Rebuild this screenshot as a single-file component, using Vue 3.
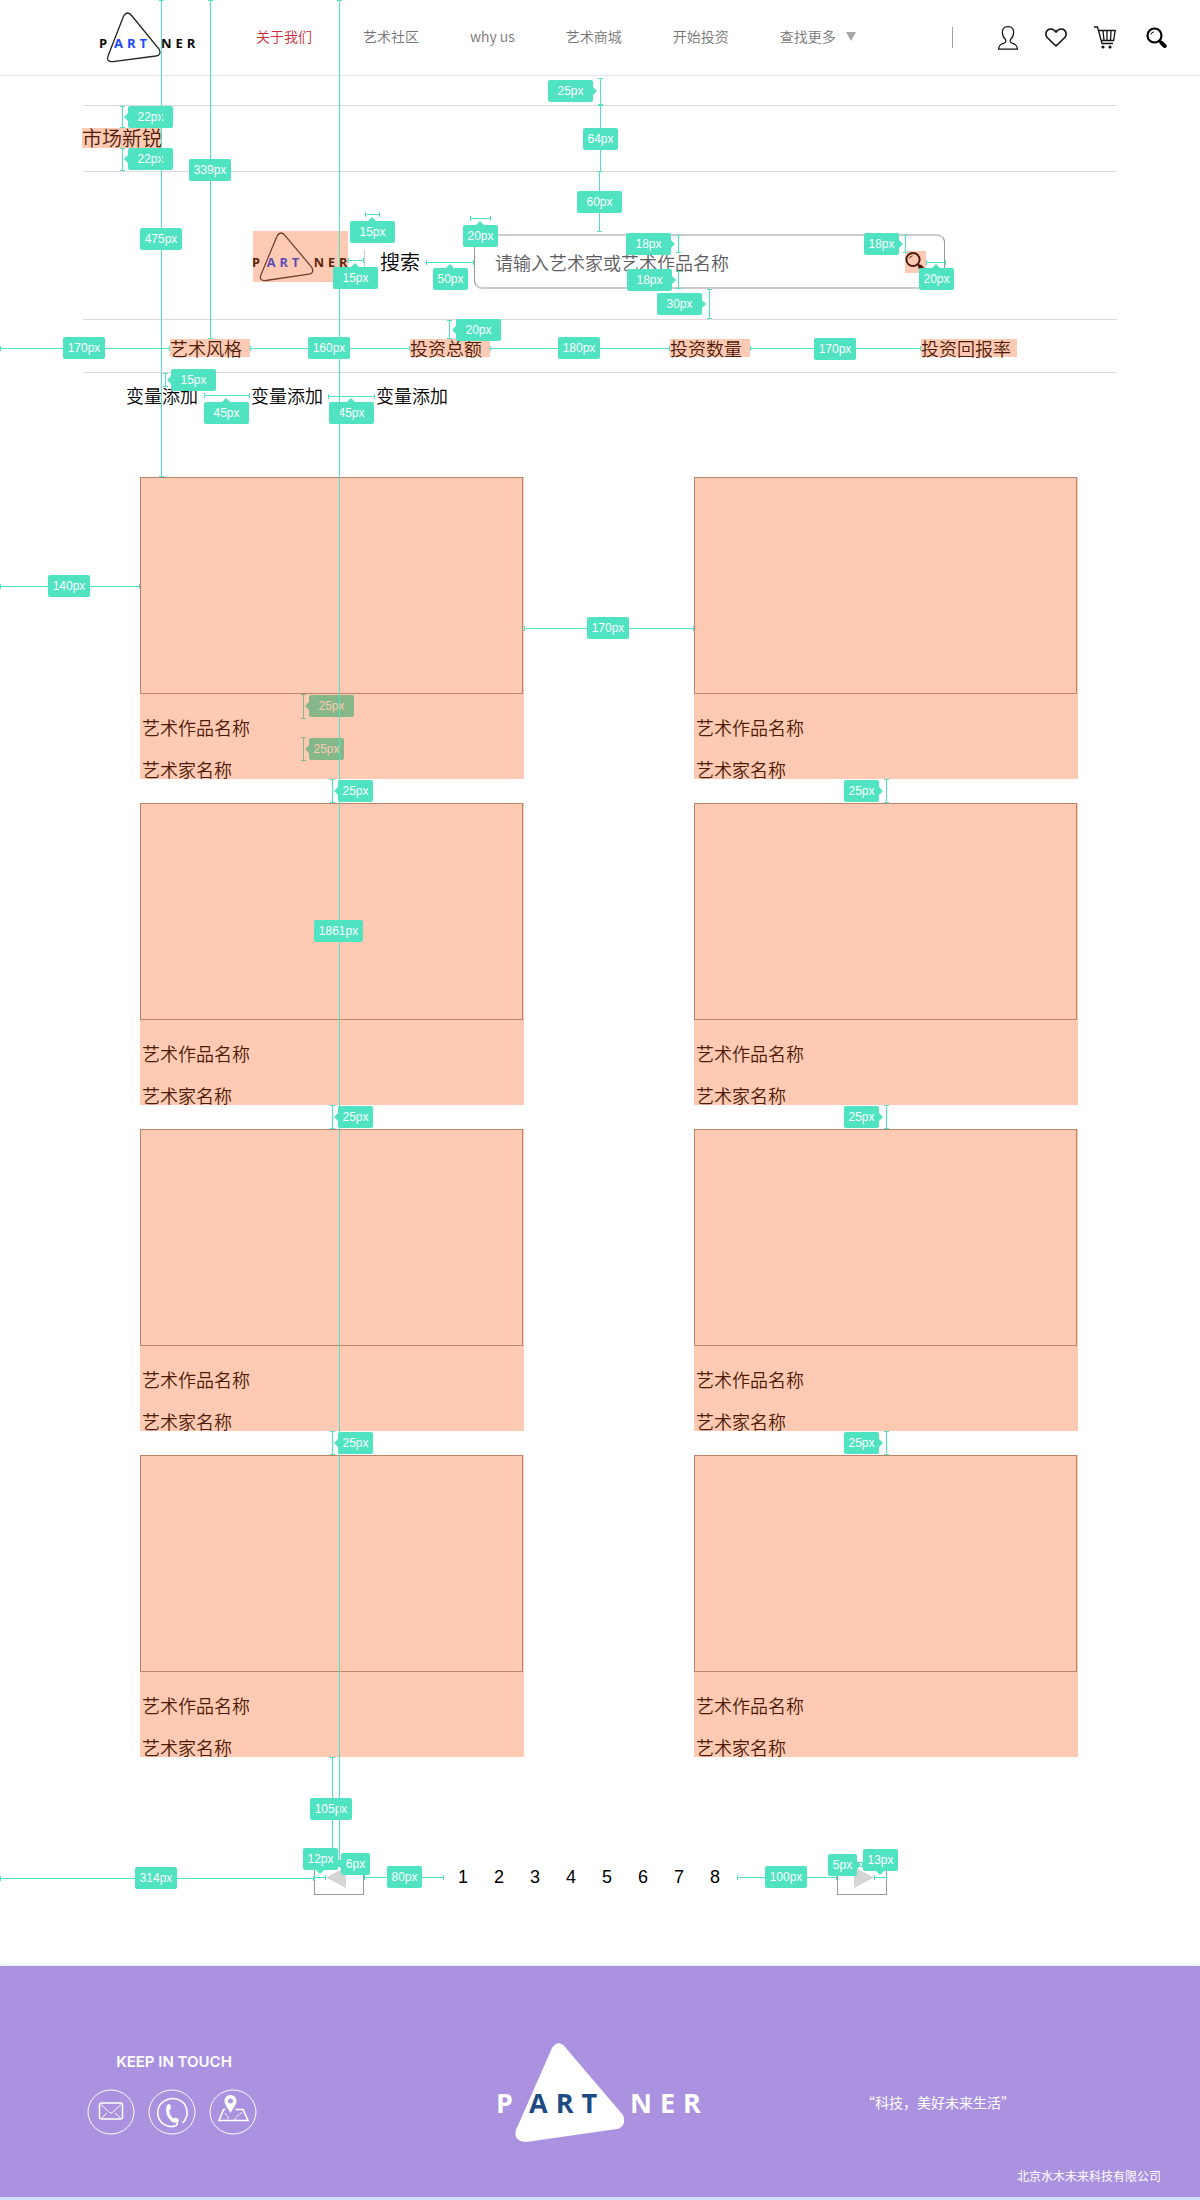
<script setup>
const navItems = ['艺术社区', 'why us', '艺术商城', '开始投资']
const filters = ['艺术风格', '投资总额', '投资数量', '投资回报率']
const variables = ['变量添加', '变量添加', '变量添加']
const works = Array.from({ length: 8 }, (_, i) => ({
  id: i + 1,
  title: '艺术作品名称',
  artist: '艺术家名称',
}))
const pages = [1, 2, 3, 4, 5, 6, 7, 8]

// Spacing marks: label text, badge box, pointer side and the measured span [x, y, length, direction]
const mark = (text, x, y, w, arrow, line, muted = false) => ({ text, x, y, w, arrow, line, muted })
const rowGaps = [780, 1106, 1432].flatMap((y) => [
  mark('25px', 338, y, 35, 'left', [332, y - 1, 24, 'v']),
  mark('25px', 844, y, 35, 'right', [886, y - 1, 24, 'v']),
])
const marks = [
  mark('22px', 128, 106, 45, 'left', [122, 106, 22, 'v']),
  mark('22px', 128, 148, 45, 'left', [122, 148, 23, 'v']),
  mark('25px', 548, 80, 45, 'right', [600, 78, 27, 'v']),
  mark('64px', 583, 128, 35, '', [600, 105, 67, 'v']),
  mark('60px', 577, 191, 45, '', [599, 171, 61, 'v']),
  mark('15px', 350, 221, 45, 'up', [365, 214, 15, 'h']),
  mark('20px', 463, 225, 35, 'up', [470, 218, 21, 'h']),
  mark('15px', 333, 267, 45, 'up', [348, 260, 16, 'h']),
  mark('50px', 433, 268, 35, 'up', [426, 262, 48, 'h']),
  mark('18px', 626, 233, 45, 'right', [678, 235, 18, 'v']),
  mark('18px', 627, 269, 45, 'right', [678, 271, 18, 'v']),
  mark('18px', 864, 233, 35, 'right', [905, 235, 18, 'v']),
  mark('20px', 919, 268, 35, 'up', [926, 262, 20, 'h']),
  mark('30px', 657, 293, 45, 'right', [709, 289, 30, 'v']),
  mark('20px', 456, 319, 45, 'left', [449, 320, 19, 'v']),
  mark('170px', 63, 337, 42, '', [0, 348, 170, 'h']),
  mark('180px', 558, 337, 42, '', [490, 348, 180, 'h']),
  mark('170px', 814, 338, 42, '', [750, 348, 171, 'h']),
  mark('15px', 171, 369, 45, 'left', [165, 373, 14, 'v']),
  mark('45px', 204, 402, 45, 'up', [204, 395, 46, 'h']),
  mark('45px', 329, 402, 45, 'up', [328, 396, 47, 'h']),
  mark('140px', 48, 575, 42, '', [0, 586, 140, 'h']),
  mark('170px', 587, 617, 42, '', [524, 628, 170, 'h']),
  mark('25px', 309, 695, 45, 'left', [303, 694, 25, 'v'], true),
  mark('25px', 309, 738, 35, 'left', [303, 737, 24, 'v'], true),
  ...rowGaps,
  mark('105px', 310, 1798, 42, '', [332, 1757, 105, 'v']),
  mark('475px', 140, 228, 42, '', [161, 0, 477, 'v']),
  mark('339px', 189, 159, 42, '', [210, 0, 339, 'v']),
  mark('1861px', 314, 920, 49, '', [339, 0, 1861, 'v']),
  mark('160px', 308, 337, 42, '', [250, 348, 160, 'h']),
  mark('12px', 303, 1848, 35, 'down', [314, 1877, 12, 'h']),
  mark('6px', 341, 1853, 29, 'left', [338, 1861, 6, 'v']),
  mark('80px', 387, 1866, 35, '', [364, 1877, 80, 'h']),
  mark('314px', 135, 1867, 42, '', [0, 1878, 314, 'h']),
  mark('100px', 765, 1866, 42, '', [737, 1877, 100, 'h']),
  mark('5px', 828, 1854, 29, 'right', [862, 1862, 5, 'v']),
  mark('13px', 863, 1849, 35, 'down', [874, 1877, 13, 'h']),
]

function spanPath([x, y, len, dir]) {
  return dir === 'v'
    ? `M${x} ${y}h1v${len}h-1zM${x - 2} ${y}h5v1h-5zM${x - 2} ${y + len - 1}h5v1h-5z`
    : `M${x} ${y}h${len}v1h-${len}zM${x} ${y - 2}h1v5h-1zM${x + len - 1} ${y - 2}h1v5h-1z`
}

function pointerPath({ x, y, w, arrow }) {
  const cx = x + Math.floor(w / 2)
  if (arrow === 'left') return `M${x} ${y + 7}l-4 4l4 4z`
  if (arrow === 'right') return `M${x + w} ${y + 7}l4 4l-4 4z`
  if (arrow === 'up') return `M${cx - 4} ${y}l4 -4l4 4z`
  if (arrow === 'down') return `M${cx - 4} ${y + 22}l4 4l4 -4z`
  return ''
}
</script>

<template>
  <div class="page">
    <header class="topbar">
      <a class="logo" href="#" aria-label="PARTNER">
        <svg width="97" height="52" viewBox="0 0 97 52">
          <path class="logo-line" d="M23.6 4Q27.5 -2 32 4L59 37Q62 43 56 44L13 49.7Q6 50 8 44Z" />
          <g class="logo-word">
            <text x="-1" y="36">P</text>
            <text class="logo-art" x="14" y="36">ART</text>
            <text x="61" y="36">NER</text>
          </g>
        </svg>
      </a>
      <nav class="nav">
        <a class="nav-link active" href="#">关于我们</a>
        <a v-for="item in navItems" :key="item" class="nav-link" href="#">{{ item }}</a>
        <button class="nav-link more" type="button">
          查找更多
          <svg width="10" height="9" viewBox="0 0 10 9"><path d="M0 0h10L5 9z" fill="#a6a6a6" /></svg>
        </button>
      </nav>
      <div class="tools">
        <span class="divider"></span>
        <button type="button" aria-label="账户">
          <svg width="20" height="24" viewBox="0 0 20 24" fill="none" stroke="#111" stroke-width="1.2">
            <path d="M10 .7C6 .7 4.2 3 4.4 6.500C4.500 9.800 5.500 11.800 7.400 13.300C8.200 14.700 7.800 16.200 6.300 17C3.500 18.200 .8 18.600 .6 23.200H19.400C19.200 18.600 16.500 18.200 13.700 17C12.200 16.200 11.800 14.700 12.600 13.300C14.500 11.800 15.500 9.800 15.600 6.500C15.800 3 14 .7 10 .7Z" />
          </svg>
        </button>
        <button type="button" aria-label="收藏">
          <svg width="22" height="19" viewBox="0 0 22 19" fill="none" stroke="#111" stroke-width="1.6" stroke-linejoin="round">
            <path d="M11 18L2.200 9.500C-.5 6.300 1.300 1 5.600 1C8.200 1 10 2.400 11 4.200C12 2.400 13.800 1 16.400 1C20.700 1 22.500 6.300 19.800 9.500Z" />
          </svg>
        </button>
        <button type="button" aria-label="购物车">
          <svg width="22" height="23" viewBox="0 0 22 23" fill="none" stroke="#111" stroke-width="1.300">
            <path d="M0 1H3.500L8 17.500H19M4.500 4.500H21.200L19.600 14.500H7.200M9 5L10 14M13 5V14M17 5L16.500 14" />
            <circle cx="9" cy="21" r="1.600" fill="#111" stroke="none" />
            <circle cx="16" cy="21" r="1.600" fill="#111" stroke="none" />
          </svg>
        </button>
        <button class="tool-search" type="button" aria-label="搜索">
          <svg width="21" height="21" viewBox="0 0 21 21" fill="none" stroke="#000">
            <circle cx="8.500" cy="8.500" r="7" stroke-width="2.200" />
            <path d="M4.800 7.500Q5.500 5.200 8 4.800" stroke-width="1" />
            <path d="M13.500 14L15 15.500" stroke-width="2" />
            <path d="M15.300 15.600L18.700 19" stroke-width="4" stroke-linecap="round" />
          </svg>
        </button>
      </div>
    </header>

    <main>
      <div class="heading">
        <h1 class="mark-bg">市场新锐</h1>
      </div>

      <form class="search" @submit.prevent>
        <div class="search-logo mark-bg">
          <svg width="95" height="51" viewBox="0 0 97 52">
            <path class="logo-line tinted" d="M24.600 5Q28.500 -1 33 5L60 37Q63 43 57 44L13 50.500Q6 51 8 45Z" />
            <g class="logo-word tinted">
              <text x="-1" y="37">P</text>
              <text class="logo-art" x="14" y="37">ART</text>
              <text x="62" y="37">NER</text>
            </g>
          </svg>
        </div>
        <span class="search-rule"></span>
        <label class="search-label" for="keyword">搜索</label>
        <div class="search-box">
          <input id="keyword" type="text" placeholder="请输入艺术家或艺术作品名称" />
          <button class="search-go mark-bg" type="submit" aria-label="搜索">
            <svg width="21" height="22" viewBox="0 0 21 22" fill="none" stroke="#4d1a08">
              <circle cx="8" cy="8.500" r="6.600" stroke-width="2" />
              <path d="M4.500 7.500Q5 5.200 7.500 4.800" stroke-width="1" />
              <path d="M13 13.500L14.500 15" stroke-width="2" />
              <path d="M15 15.500L18 18.500" stroke-width="4" stroke-linecap="round" />
            </svg>
          </button>
        </div>
      </form>

      <div class="filters">
        <button v-for="name in filters" :key="name" class="mark-bg" type="button">{{ name }}</button>
      </div>

      <div class="variables">
        <button v-for="(name, i) in variables" :key="i" type="button">{{ name }}</button>
      </div>

      <section class="works">
        <article v-for="work in works" :key="work.id" class="work mark-bg">
          <div class="thumb"></div>
          <h2>{{ work.title }}</h2>
          <p>{{ work.artist }}</p>
        </article>
      </section>

      <nav class="pager" aria-label="分页">
        <button class="step" type="button" aria-label="上一页">
          <svg width="20" height="21" viewBox="0 0 20 21"><path d="M0 10.500L20 0V21z" fill="#d4d4d4" /></svg>
        </button>
        <div class="pages">
          <a v-for="n in pages" :key="n" href="#">{{ n }}</a>
        </div>
        <button class="step next" type="button" aria-label="下一页">
          <svg width="20" height="21" viewBox="0 0 20 21"><path d="M20 10.500L0 0V21z" fill="#d4d4d4" /></svg>
        </button>
      </nav>
    </main>

    <footer class="footer">
      <div class="footer-main">
        <div class="contact">
          <h3>KEEP IN TOUCH</h3>
          <div class="contact-links">
            <a href="#" aria-label="邮箱">
              <svg width="48" height="46" viewBox="0 0 48 46" fill="none" stroke="#fff">
                <ellipse cx="24" cy="23" rx="23" ry="22" />
                <rect x="12.500" y="14" width="23" height="16" rx="2" stroke-width="1.500" />
                <path d="M14 15.500L22.500 23.500Q24 24.800 25.500 23.500L34 15.500M14.500 29L20 24M33.500 29L28 24" />
              </svg>
            </a>
            <a href="#" aria-label="电话">
              <svg width="48" height="46" viewBox="0 0 48 46" fill="none" stroke="#fff">
                <ellipse cx="24" cy="23" rx="23" ry="22" />
                <path d="M34.500 34C42 27 40 14 30 10.500C20 7 9.500 14 9.700 24C10 34 20 40 28 36.500Q29.500 35.500 29.500 33" stroke-width="1.600" />
                <path d="M19.500 15.500L21.500 15C23 16.500 23.300 18.500 22.500 20.500L21 21.500C21.500 25 23 27.500 25.500 29.500L27.500 28.500C29.500 28.800 30.500 30 31 31.500C29 34.500 25.500 34.500 22.500 31.500C18.500 27.500 16.500 19.500 19.500 15.500Z" fill="#fff" stroke="none" />
              </svg>
            </a>
            <a href="#" aria-label="地址">
              <svg width="48" height="46" viewBox="0 0 48 46" fill="none" stroke="#fff">
                <ellipse cx="24" cy="23" rx="23" ry="22" />
                <path d="M16.500 20.500H14.500L10 31.500H39L34 20.500H26.500" stroke-width="1.600" />
                <path d="M15.500 24.500L19 27V31M33 23.500L29 26L25.500 31" stroke-dasharray="3 1" />
                <path fill-rule="evenodd" d="M21.500 6C17.800 6 15.500 8.800 15.500 12C15.500 15.500 19 19 21.500 24C24 19 27.500 15.500 27.500 12C27.500 8.800 25.200 6 21.500 6ZM21.500 9.500A2.500 2.500 0 1 1 21.500 14.500A2.500 2.500 0 1 1 21.500 9.500Z" fill="#fff" stroke="none" />
              </svg>
            </a>
          </div>
        </div>
        <svg class="footer-logo" width="206" height="100" viewBox="0 0 206 100">
          <path d="M54 5Q60 -4 67 4L125 72Q129 83 119 86L28 99Q15 98 18 87Z" fill="#fff" />
          <text x="-2" y="70">P</text>
          <text class="footer-art" x="31" y="70">ART</text>
          <text x="132" y="70">NER</text>
        </svg>
        <p class="slogan">“科技，美好未来生活”</p>
      </div>
      <p class="company">北京水木未来科技有限公司</p>
    </footer>

    <svg class="marks" aria-hidden="true">
      <g v-for="(m, i) in marks" :key="i" :class="{ muted: m.muted }">
        <path :d="spanPath(m.line)" />
        <path :d="pointerPath(m)" />
        <rect :x="m.x" :y="m.y" :width="m.w" height="22" rx="2" />
        <text :x="m.x + m.w / 2" :y="m.y + 15">{{ m.text }}</text>
      </g>
    </svg>
  </div>
</template>

<style>
body {
  margin: 0;
  background: #fff;
}
</style>

<style scoped>
.page {
  position: relative;
  font-family: "Noto Sans CJK SC", "Noto Sans", sans-serif;
  font-weight: 350;
  color: #000;
}

h1,
h2,
h3,
p {
  margin: 0;
  font-weight: 350;
}

button {
  padding: 0;
  border: 0;
  background: none;
  color: inherit;
  font: inherit;
  white-space: nowrap;
  cursor: pointer;
}

a {
  color: inherit;
  text-decoration: none;
}

svg {
  display: block;
  overflow: visible;
}

.mark-bg {
  background: #ffcab3;
  color: #4d1a08;
}

.topbar {
  display: flex;
  align-items: center;
  height: 75px;
  padding: 0 33px 0 100px;
  border-bottom: 1px solid #e4e4e4;
}

.logo-line {
  fill: none;
  stroke: #222;
  stroke-width: 1.3;
}

.logo-word {
  font: 700 13px "Open Sans", sans-serif;
  letter-spacing: 4px;
  fill: #0a0a0a;
}

.logo-art {
  fill: #1b49ff;
}

.logo-line.tinted {
  stroke: #6e4030;
}

.logo-word.tinted {
  fill: #5c2510;
}

.tinted .logo-art {
  fill: #5e4cb8;
}

.nav {
  display: flex;
  gap: 51px;
  margin-left: 59px;
  padding-bottom: 4px;
  font-size: 14px;
  line-height: 20px;
  color: #757575;
  white-space: nowrap;
}

.nav-link.active {
  color: #c9303e;
}

.more {
  display: flex;
  gap: 10px;
}

.more svg {
  margin-top: 6px;
}

.tools {
  display: flex;
  align-items: center;
  gap: 27px;
  margin-left: auto;
}

.divider {
  width: 1px;
  height: 21px;
  margin-right: 18px;
  background: #a0a0a0;
}

.tool-search {
  margin-left: 3px;
}

.heading {
  display: flex;
  margin: 29px 83px 0;
  padding: 22px 0 23px;
  border-top: 1px solid #dadada;
  border-bottom: 1px solid #dadada;
}

.heading h1 {
  margin-left: -1px;
  font-size: 20px;
  line-height: 20px;
}

.search {
  display: flex;
  align-items: flex-end;
  min-height: 58px;
  padding: 59px 255px 30px 253px;
}

.search-logo {
  align-self: flex-start;
}

.search-rule {
  width: 1px;
  height: 24px;
  margin: 0 15px 15px 16px;
  background: #ccc;
}

.search-label {
  margin-right: 54px;
  font-size: 20px;
  line-height: 54px;
  white-space: nowrap;
}

.search-box {
  display: flex;
  flex: 1;
  align-items: center;
  box-sizing: border-box;
  height: 55px;
  padding: 0 18px 0 20px;
  border: solid #999;
  border-width: 2px 1px;
  border-top-color: #ccc;
  border-bottom-color: #ccc;
  border-radius: 8px;
}

.search-box input {
  flex: 1;
  min-width: 0;
  padding: 0;
  border: 0;
  outline: 0;
  background: none;
  font: inherit;
  font-size: 18px;
}

.search-box input::placeholder {
  color: #5c5c5c;
  opacity: 1;
}

.filters {
  display: flex;
  margin: 0 83px;
  padding: 19px 0 15px 87px;
  border-top: 1px solid #dadada;
  border-bottom: 1px solid #dadada;
  font-size: 18px;
  line-height: 18px;
}

.filters button {
  width: 80px;
  margin-right: 160px;
  text-align: left;
}

.filters button:nth-child(2) {
  margin-right: 180px;
}

.filters button:nth-child(3) {
  margin-right: 171px;
}

.filters button:last-child {
  width: 96px;
  margin-right: 0;
}

.variables {
  display: flex;
  gap: 45px;
  padding: 13px 126px 0;
  font-size: 18px;
  line-height: 18px;
}

.variables button {
  width: 80px;
  text-align: left;
}

.works {
  display: grid;
  grid-template-columns: 1fr 1fr;
  gap: 24px 170px;
  margin-top: 73px;
  padding: 0 122px 0 140px;
}

.work {
  padding-bottom: 1px;
}

.work h2,
.work p {
  margin: 24px 0 0 2px;
  font-size: 18px;
  line-height: 18px;
}

.thumb {
  box-sizing: border-box;
  height: 217px;
  margin-right: 1px;
  border: 1px solid #bd846c;
}

.pager {
  display: flex;
  margin: 105px 0 71px 314px;
  font: 18px/30px "Liberation Sans", sans-serif;
}

.step {
  display: flex;
  align-items: center;
  box-sizing: border-box;
  width: 50px;
  height: 33px;
  padding-left: 11px;
  padding-bottom: 2px;
  border: 1px solid #999;
}

.step.next {
  padding-left: 16px;
}

.pages {
  display: flex;
  margin: 0 104px 0 81px;
}

.pages a {
  width: 36px;
  text-align: center;
}

.footer {
  box-sizing: border-box;
  padding: 77px 39px 11px 87px;
  border-bottom: 3px solid #cfe2fd;
  background: #aa92e0;
  box-shadow: 0 -1px 3px #dce9ff;
  color: #fff;
}

.footer-main {
  display: flex;
  align-items: flex-start;
}

.contact {
  margin-top: 9px;
}

.contact h3 {
  margin-bottom: 17px;
  padding-left: 4px;
  font: 600 15px/20px "Inter", sans-serif;
  text-align: center;
}

.contact-links {
  display: flex;
  gap: 13px;
}

.footer-logo {
  flex: none;
  margin-left: 241px;
  font: 700 27px "Open Sans", sans-serif;
  letter-spacing: 8px;
  fill: #fff;
}

.footer-logo .footer-art {
  fill: #1c4a82;
}

.slogan {
  margin: 49px 0 0 157px;
  font-size: 14px;
  line-height: 20px;
  font-weight: 400;
  text-spacing-trim: space-all;
  white-space: nowrap;
}

.company {
  margin-top: 23px;
  font-size: 12px;
  line-height: 20px;
  font-weight: 400;
  text-align: right;
}

.marks {
  position: absolute;
  top: 0;
  left: 0;
  width: 100%;
  height: 100%;
  overflow: hidden;
  pointer-events: none;
  fill: #50e3c2;
  font: 12px "Liberation Sans", sans-serif;
}

.marks text {
  fill: #fff;
  text-anchor: middle;
}

.marks .muted {
  fill: #85b788;
}

.marks .muted text {
  fill: #ffcab3;
}
</style>
